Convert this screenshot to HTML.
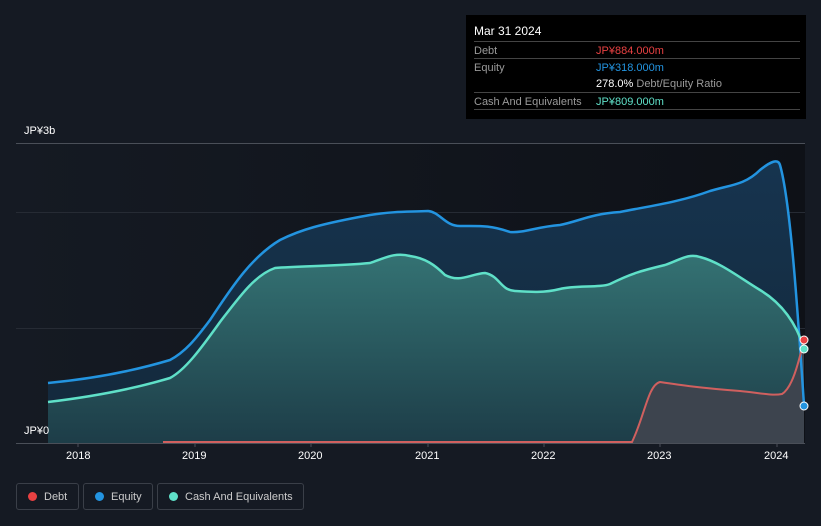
<!DOCTYPE html>
<html><head><style>
body{margin:0;width:821px;height:526px;background:#151a23;font-family:"Liberation Sans",sans-serif;overflow:hidden;position:relative}
.tt{position:absolute;left:466px;top:15px;width:340px;height:104px;background:#000;color:#fff;font-size:11px}
.tt .h{position:absolute;left:8px;top:9px;font-size:12px}
.row{position:absolute;left:8px;width:326px;border-top:1px solid #444;height:17px}
.row span{position:absolute;top:3px}
.l{left:0;color:#9a9a9a}.v{left:122px}
.leg{position:absolute;top:483px;height:27px;border:1px solid #3a3f48;border-radius:3px;color:#ccc;font-size:11px;line-height:26px;box-sizing:border-box}
.leg i{position:absolute;left:11px;top:8px;width:9px;height:9px;border-radius:50%}
.leg b{font-weight:normal;position:absolute;left:27px}
.ax{position:absolute;color:#fff;font-size:11px}
</style></head><body>
<svg width="821" height="526" style="position:absolute;left:0;top:0">
<defs>
<linearGradient id="bg" x1="0" x2="1"><stop offset="0" stop-color="#151a23"/><stop offset="1" stop-color="#0e1117"/></linearGradient>
<linearGradient id="eq" x1="0" y1="0" x2="0" y2="1"><stop offset="0" stop-color="#16344f"/><stop offset="1" stop-color="#13283a"/></linearGradient>
<linearGradient id="ca" x1="0" y1="0" x2="0" y2="1"><stop offset="0" stop-color="#347273"/><stop offset="1" stop-color="#1d3d48"/></linearGradient>
</defs>
<rect x="16" y="143" width="789" height="300" fill="url(#bg)"/>
<line x1="16" y1="143.5" x2="805" y2="143.5" stroke="#4a4f58"/>
<line x1="16" y1="212.5" x2="805" y2="212.5" stroke="#262b34"/>
<line x1="16" y1="328.5" x2="805" y2="328.5" stroke="#262b34"/>
<path d="M48,383 C90,379 130,372 170,360 C185,352 195,340 210,320 C230,290 250,258 280,240 C300,230 320,224 370,215 C395,211 410,212 428,211 C440,212 445,226 460,226 C480,226 490,225 510,232 C525,233 535,227 560,225 C580,221 590,214 620,212 C650,206 680,202 710,191 C730,185 745,185 760,170 C770,162 778,158 780,165 C790,200 797,300 804,405 L804,443 L48,443Z" fill="url(#eq)"/>
<path d="M48,402 C90,397 130,390 170,378 C185,370 200,350 220,322 C240,296 255,275 275,268 C300,266 340,266 370,263 C385,258 395,252 410,256 C425,258 435,265 445,275 C460,283 470,274 485,273 C500,276 500,290 515,291 C530,292 544,293 560,289 C575,285 600,288 610,284 C630,274 640,271 665,265 C680,260 688,253 700,257 C720,262 740,278 760,290 C780,302 795,320 804,348 L804,443 L48,443Z" fill="url(#ca)"/>
<path d="M632,443 C645,415 648,385 660,382 C680,385 700,388 740,391 C760,393 772,396 782,394 C792,388 798,365 804,340 L804,443Z" fill="#3d444e"/>
<path d="M48,383 C90,379 130,372 170,360 C185,352 195,340 210,320 C230,290 250,258 280,240 C300,230 320,224 370,215 C395,211 410,212 428,211 C440,212 445,226 460,226 C480,226 490,225 510,232 C525,233 535,227 560,225 C580,221 590,214 620,212 C650,206 680,202 710,191 C730,185 745,185 760,170 C770,162 778,158 780,165 C790,200 797,300 804,405" fill="none" stroke="#2394e0" stroke-width="2.5"/>
<path d="M48,402 C90,397 130,390 170,378 C185,370 200,350 220,322 C240,296 255,275 275,268 C300,266 340,266 370,263 C385,258 395,252 410,256 C425,258 435,265 445,275 C460,283 470,274 485,273 C500,276 500,290 515,291 C530,292 544,293 560,289 C575,285 600,288 610,284 C630,274 640,271 665,265 C680,260 688,253 700,257 C720,262 740,278 760,290 C780,302 795,320 804,348" fill="none" stroke="#5fe0c8" stroke-width="2.5"/>
<path d="M163,442 L632,442 C645,415 648,385 660,382 C680,385 700,388 740,391 C760,393 772,396 782,394 C792,388 798,365 804,340" fill="none" stroke="#d0605f" stroke-width="2"/>
<circle cx="804" cy="340" r="4" fill="#e84142" stroke="#fff"/>
<circle cx="804" cy="349" r="4" fill="#5fe0c8" stroke="#fff"/>
<circle cx="804" cy="406" r="4" fill="#2394e0" stroke="#fff"/>
<line x1="16" y1="443.5" x2="805" y2="443.5" stroke="#4a4f58"/>
<g stroke="#4a4f58"><line x1="78" y1="443" x2="78" y2="447"/><line x1="195" y1="443" x2="195" y2="447"/><line x1="311" y1="443" x2="311" y2="447"/><line x1="428" y1="443" x2="428" y2="447"/><line x1="544" y1="443" x2="544" y2="447"/><line x1="660" y1="443" x2="660" y2="447"/><line x1="777" y1="443" x2="777" y2="447"/></g>
</svg>
<div class="ax" style="left:24px;top:125px">JP¥3b</div>
<div class="ax" style="left:24px;top:425px">JP¥0</div>
<div class="ax" style="left:66px;top:450px">2018</div>
<div class="ax" style="left:182px;top:450px">2019</div>
<div class="ax" style="left:298px;top:450px">2020</div>
<div class="ax" style="left:415px;top:450px">2021</div>
<div class="ax" style="left:531px;top:450px">2022</div>
<div class="ax" style="left:647px;top:450px">2023</div>
<div class="ax" style="left:764px;top:450px">2024</div>
<div class="tt">
<div class="h">Mar 31 2024</div>
<div class="row" style="top:26px"><span class="l">Debt</span><span class="v" style="color:#e84142">JP¥884.000m</span></div>
<div class="row" style="top:43px"><span class="l">Equity</span><span class="v" style="color:#2394e0">JP¥318.000m</span></div>
<div class="row" style="top:60px;border-top:none"><span class="v" style="color:#fff">278.0% <span style="color:#9a9a9a;position:static">Debt/Equity Ratio</span></span></div>
<div class="row" style="top:77px"><span class="l">Cash And Equivalents</span><span class="v" style="color:#5fe0c8">JP¥809.000m</span></div>
<div class="row" style="top:94px;height:0"></div>
</div>
<div class="leg" style="left:16px;width:63px"><i style="background:#e84142"></i><b>Debt</b></div>
<div class="leg" style="left:83px;width:70px"><i style="background:#2394e0"></i><b>Equity</b></div>
<div class="leg" style="left:157px;width:147px"><i style="background:#5fe0c8"></i><b>Cash And Equivalents</b></div>
</body></html>
